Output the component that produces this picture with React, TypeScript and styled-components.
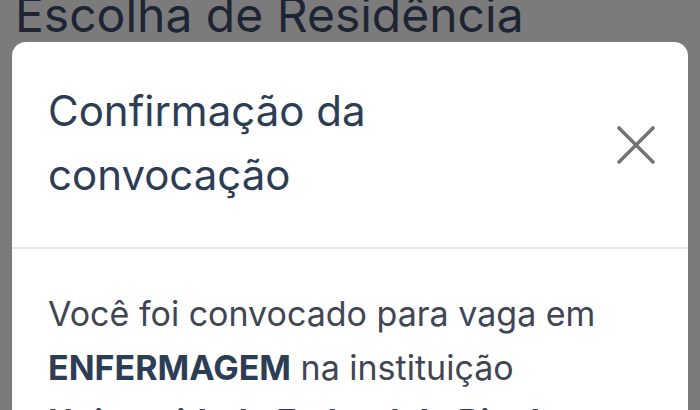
import styled, { createGlobalStyle } from "styled-components"

const GlobalStyle = createGlobalStyle`
  html, body {
    margin: 0;
    padding: 0;
    background: #7b7b7b;
  }
  body {
    font-family: Inter, "Noto Sans", Roboto, sans-serif;
  }
`

export default function App() {
  return (
    <Screen>
      <GlobalStyle />
      <PageTitle>Escolha de Residência</PageTitle>
      <Modal>
        <ModalHeader>
          <ModalTitle>Confirmação da convocação</ModalTitle>
          <CloseButton aria-label="Fechar">
            <svg width="38" height="38" viewBox="0 0 38 38">
              <path d="M2 2 L36 36 M36 2 L2 36" stroke="#757575" strokeWidth="3.6" strokeLinecap="round" />
            </svg>
          </CloseButton>
        </ModalHeader>
        <ModalBody>
          Você foi convocado para vaga em <Strong>ENFERMAGEM</Strong> na instituição{" "}
          <Strong>Universidade Federal do Rio de Janeiro</Strong>
        </ModalBody>
      </Modal>
    </Screen>
  )
}

const Screen = styled.div`
  width: 700px;
  height: 410px;
  overflow: hidden;
  background: #7b7b7b;
  display: flex;
  flex-direction: column;
`
const PageTitle = styled.h1`
  margin: -10px 0 0 15px;
  font-size: 48px;
  line-height: 50px;
  font-weight: 400;
  color: #1d2433;
  white-space: nowrap;
`
const Modal = styled.section`
  margin: 2px 12px 0;
  flex: 1;
  background: #fff;
  border-radius: 14px 14px 0 0;
  display: flex;
  flex-direction: column;
`
const ModalHeader = styled.header`
  height: 207px;
  box-sizing: border-box;
  padding: 37px 33px 0 36px;
  display: flex;
  align-items: flex-start;
  justify-content: space-between;
  border-bottom: 2px solid #e6e6e6;
`
const ModalTitle = styled.h2`
  margin: 0;
  width: 360px;
  font-size: 42px;
  line-height: 64px;
  font-weight: 400;
  color: #2c3d54;
`
const CloseButton = styled.button`
  margin-top: 47px;
  padding: 0;
  border: 0;
  background: none;
  display: flex;
`
const ModalBody = styled.p`
  margin: 0;
  padding: 38px 30px 0 36px;
  font-size: 34px;
  line-height: 54px;
  color: #414654;
`
const Strong = styled.strong`
  font-weight: 700;
  color: #2c3d54;
`
